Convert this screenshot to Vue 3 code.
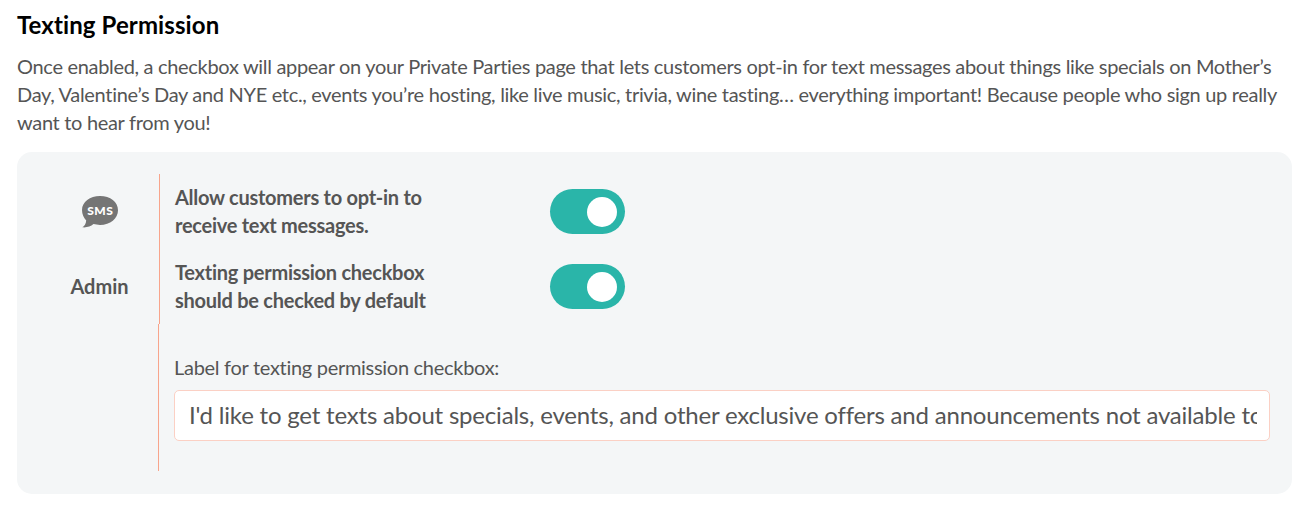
<script setup>
import { ref } from 'vue'
const allow = ref(true)
const checked = ref(true)
const label = ref("I'd like to get texts about specials, events, and other exclusive offers and announcements not available to the public.")
</script>

<template>
  <main class="page">
    <h1>Texting Permission</h1>
    <p class="intro">Once enabled, a checkbox will appear on your Private Parties page that lets customers opt-in for text messages about things like specials on Mother’s<br>Day, Valentine’s Day and NYE etc., events you’re hosting, like live music, trivia, wine tasting… everything important! Because people who sign up really<br>want to hear from you!</p>
    <section class="card">
      <div class="row">
        <div class="side">
          <svg class="sms" width="38" height="34" viewBox="0 0 38 34">
            <path d="M19 1C9 1 1 7 1 15c0 4.200 1.700 7.800 4.200 10.400C5 28.500 3.400 31 1.300 32.300c4.500.4 8.300-.7 11.200-3.200 2 .5 4.200.8 6.500.8 10.300 0 18-6.300 18-14.700S29.300 1 19 1z" fill="#757575" />
            <text x="19.300" y="19.500" text-anchor="middle">SMS</text>
          </svg>
        </div>
        <div class="desc">Allow customers to opt-in to<br>receive text messages.</div>
        <button class="toggle" :class="{ on: allow }" @click="allow = !allow"><span class="knob"></span></button>
      </div>
      <div class="row">
        <div class="side"><span class="role">Admin</span></div>
        <div class="desc">Texting permission checkbox<br>should be checked by default</div>
        <button class="toggle" :class="{ on: checked }" @click="checked = !checked"><span class="knob"></span></button>
      </div>
      <div class="field">
        <label for="optin-label">Label for texting permission checkbox:</label>
        <input id="optin-label" v-model="label" type="text">
      </div>
    </section>
  </main>
</template>

<style>
body { background: #fff; }
</style>

<style scoped>
.page { box-sizing: border-box; width: 1306px; height: 516px; padding: 10px 14px 0 17px; overflow: hidden; font-family: Lato, sans-serif; color: #555; }
h1 { margin: 0; font-size: 24px; line-height: 29px; font-weight: 700; letter-spacing: .1px; color: #000; }
.intro { margin: 13px 0 16px; font-size: 20px; line-height: 28px; letter-spacing: -.316px; white-space: nowrap; }
.card { box-sizing: border-box; width: 1275px; height: 342px; padding: 22px 22px 0 22px; border-radius: 15px; background: #f4f6f7; }
.row { display: flex; align-items: center; height: 75px; }
.side { box-sizing: border-box; display: flex; align-items: center; justify-content: center; width: 121px; height: 75px; padding-left: 2px; font-size: 20px; font-weight: 700; border-right: 1px solid #f8a58c; }
.role { padding: 0 1px 1px 0; }
.sms text { font: 900 12px Lato, sans-serif; letter-spacing: .5px; fill: #fff; }
.desc { box-sizing: border-box; width: 390px; padding: 0 0 1px 15px; font-size: 20px; line-height: 28px; font-weight: 700; letter-spacing: -.26px; }
.toggle { display: flex; align-items: center; width: 75px; height: 45px; padding: 0 8px; border: 0; border-radius: 23px; background: #bbb; }
.toggle.on { justify-content: flex-end; background: #2ab5a9; }
.knob { width: 30px; height: 30px; border-radius: 50%; background: #fff; }
.field { box-sizing: border-box; height: 147px; margin-left: 119px; padding: 29px 0 0 15px; border-left: 1px solid #f8a58c; }
label { display: block; font-size: 20px; line-height: 28px; letter-spacing: -.29px; }
input { box-sizing: border-box; display: block; width: 1096px; height: 51px; margin: 9px 0 0; padding: 0 12px 2px 14px; border: 1px solid #fbd0c4; border-radius: 5px; background: #fff; color: #555; font: 24px Lato, sans-serif; letter-spacing: -.2px; outline: 0; }
</style>
